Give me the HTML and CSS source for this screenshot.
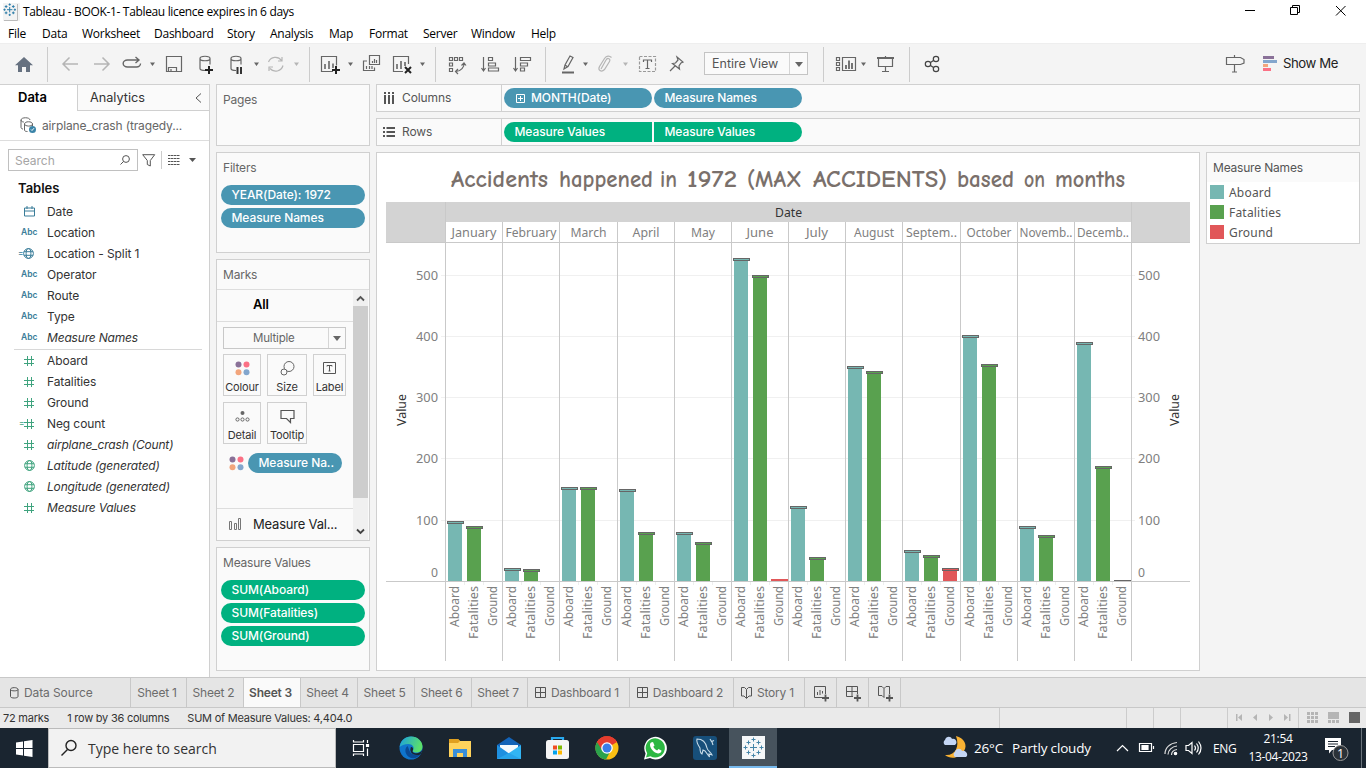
FILE: index.html
```html
<!DOCTYPE html>
<html lang="en">
<head>
<meta charset="utf-8">
<title>Tableau - BOOK-1</title>
<link rel="stylesheet" href="styles.css">
</head>
<body>
<svg width="0" height="0" class="defs" aria-hidden="true">
  <defs>
    <symbol id="hash" viewBox="0 0 10 10"><path d="M3.500 0v10M7.500 0v10M0 3.500h10M0 7.500h10" fill="none" stroke="#3fa37e" stroke-width="1"/></symbol>
    <symbol id="globe" viewBox="0 0 11 11"><g fill="none" stroke="currentColor" stroke-width="1"><circle cx="5.5" cy="5.5" r="4.9"/><ellipse cx="5.5" cy="5.5" rx="2.4" ry="4.9"/><path d="M1 3.7h9M1 7.3h9"/></g></symbol>
    <symbol id="dots" viewBox="0 0 15 15"><circle cx="3.5" cy="3.5" r="3" fill="#8a7198"/><circle cx="11.5" cy="3.5" r="3" fill="#fb7185"/><circle cx="3.5" cy="11.3" r="3" fill="#f2a57c"/><circle cx="11.5" cy="11.3" r="3" fill="#83a6cd"/></symbol>
    <symbol id="dash" viewBox="0 0 12 12"><path d="M.5 .5h10v10h-10zM5.500 .5v10M.5 5.5h10" fill="none" stroke="#555"/></symbol>
  </defs>
</svg>

<header class="titlebar">
  <svg class="app-icon" width="17" height="18" viewBox="0 0 17 18"><path d="M0 0h17v18H0z" fill="#f3f3f3"/><path d="M14.500 1v16.500H1" fill="none" stroke="#bbb"/><g stroke="#2b7ba8" stroke-width="1.1" transform="translate(-.5 -.5) scale(.9)"><path d="M8 5v6M5 8h6M8 1v2.5M6.8 2.3h2.4M8 12.500v2.500M6.800 13.700h2.400M2.300 6.800v2.400M1 8h2.500M13.700 6.800v2.400M12.500 8h2.500M4 3v3M2.500 4.500h3M12 3v3M10.500 4.500h3M4 10v3M2.500 11.500h3M12 10v3M10.500 11.500h3"/></g></svg>
  <span class="app-title">Tableau - BOOK-1- Tableau licence expires in 6 days</span>
  <svg class="win-ctl" width="126" height="23" viewBox="1236 0 126 23" fill="none" stroke="#000"><path d="M1245 10.500h10M1290.500 7.500h7v7h-7zM1292.500 7v-1.500h7v7h-1.500M1336 6l9.500 9.500M1345.500 6l-9.500 9.500"/></svg>
</header>
<nav class="menubar"><span>File</span><span>Data</span><span>Worksheet</span><span>Dashboard</span><span>Story</span><span>Analysis</span><span>Map</span><span>Format</span><span>Server</span><span>Window</span><span>Help</span></nav>

<div class="toolbar">
  <svg width="47" height="41" viewBox="0 43 47 41"><path d="M24 57l9 8.300h-3V72h-4v-5h-4v5h-4v-6.700h-3z" fill="#667180"/></svg>
  <i></i>
  <svg width="261" height="41" viewBox="48 43 261 41" fill="none" stroke="#666" stroke-width="1.200">
    <path d="M63 64h15M69.500 57.500L63 64l6.500 6.500M94 64h15M102.500 57.500L109 64l-6.500 6.500" stroke="#b5b5b5" stroke-width="1.500"/>
    <path d="M139 60h-11.500a4.200 3.400 0 0 0 0 7h9a4.200 3.400 0 0 0 4-3.500M135.500 57l3.500 3-3.500 3" stroke-width="1.400"/>
    <path d="M166.500 56.500h15v15h-15zM168.500 71v-3.500h8V71M171 71v-2"/>
    <path d="M209 70.500h-3.500c-3 0-5.500-.5-5.500-2v-10c0-3 10-3 10 0v6M200 58.500c0 3 10 3 10 0"/><path d="M205 70h8M209 66v8" stroke="#222" stroke-width="2"/>
    <path d="M236 70.500c-3 0-5-.5-5-2V58.500c0-3 10-3 10 0v6M231 58.500c0 3 10 3 10 0"/><path d="M237.500 67v7M241 67v7" stroke="#333" stroke-width="2"/>
    <path d="M268.500 62a7.500 7.500 0 0 1 13-1.500M283 65.500a7.500 7.500 0 0 1-13 3M282 57v4h-4M269 71v-4h4" stroke="#b5b5b5"/>
    <g stroke="none" fill="#666"><path d="M150 62.500h5l-2.500 3.500zM254 62.500h5l-2.500 3.500z"/><path d="M294 62.500h5l-2.500 3.500z" fill="#b5b5b5"/></g>
  </svg>
  <i></i>
  <svg width="125" height="41" viewBox="310 43 125 41" fill="none" stroke="#666" stroke-width="1.200">
    <path d="M333 71.500h-11.500v-15h15v9"/><path d="M325 69v-5M329 69v-8M333 68v-4.500" stroke-width="1.600"/><path d="M332 70h8M336 66v8" stroke="#222" stroke-width="2"/>
    <path d="M369.500 55.500h10v9h-10zM374.500 67.500v3h-11v-9.500h3.500M372.500 63v-2M374.500 63v-4M376.500 63v-3M366.500 69v-3M369.500 69v-3M372 69v-3"/>
    <path d="M403 71.500h-9.500v-15h15v7.500"/><path d="M397 69v-5M401 69v-8M405 66v-4" stroke-width="1.600"/><path d="M405 67l6 6M411 67l-6 6" stroke="#222" stroke-width="2"/>
    <g stroke="none" fill="#666"><path d="M348 62.500h5l-2.500 3.500zM420 62.500h5l-2.500 3.500z"/></g>
  </svg>
  <i></i>
  <svg width="109" height="41" viewBox="436 43 109 41" fill="none" stroke="#666" stroke-width="1.200">
    <path d="M449.500 57.500h3v3h-3zM454.500 57.500h3v3h-3zM459.500 57.500h3v3h-3zM449.500 63h3v3h-3zM449.500 68.500h3v3h-3zM464 63c.5 4-3 8-8 8.500M461.500 65.500l2.500-2.500 2 2.500M458 69l-2.500 2.500 2.500 2.500"/>
    <path d="M483.500 57v13M481.500 68l2 3 2-3M488.500 57.500h4v3h-4zM488.500 63h7v3h-7zM488.500 68h10v3h-10zM515.500 57v13M513.500 68l2 3 2-3M520.500 57.500h10v3h-10zM520.500 63h7v3h-7zM520.500 68h4v3h-4z"/>
  </svg>
  <i></i>
  <svg width="158" height="41" viewBox="546 43 158 41" fill="none" stroke="#666" stroke-width="1.200">
    <path d="M562 72.500h12" stroke-width="2"/><path d="M564 69l1-4 5-9 3 1.500-5 9zM565 65l3 2"/>
    <path d="M601 69l5-9c1.500-3 5-1 3.500 1.500l-5 8c-3 3-7 1-5-3l5-8c2-3 5-3 7-1" stroke="#b5b5b5"/>
    <path d="M639.500 56.500h16v15h-16z" stroke="#999" stroke-dasharray="3 1.500"/><path d="M643.500 62v-2h8v2M647.500 60v8.500M645.500 68.500h4"/>
    <path d="M677 57l6 5-2 1-2 3 .5 3-7-5.500 3-.5 2.500-3zM675 66l-5 5"/>
    <path d="M583 62.500h5l-2.500 3.500z" stroke="none" fill="#666"/><path d="M623 62.500h5l-2.500 3.500z" stroke="none" fill="#b5b5b5"/>
  </svg>
  <div class="view-select"><span>Entire View</span><b></b></div>
  <i class="after-select"></i>
  <svg width="85" height="41" viewBox="824 43 85 41" fill="none" stroke="#666" stroke-width="1.200"><path d="M836.500 57.500h3v3h-3zM836.500 62.500h3v3h-3zM836.500 67.500h3v3h-3zM842.500 57.500h13v13h-13z"/><path d="M846 69v-4M849 69v-8.500M852 69v-6" stroke-width="1.800"/><path d="M861 62.500h5l-2.500 3.500z" stroke="none" fill="#666"/><path d="M877 58h17" stroke-width="2"/><path d="M878.500 58v8.500h14V58M885.500 56v2M885.500 66.500v5M882 71.500h7"/></svg>
  <i></i>
  <svg width="60" height="41" viewBox="910 43 60 41" fill="none" stroke="#444" stroke-width="1.200"><circle cx="928" cy="64" r="2.700"/><circle cx="936" cy="59" r="2.700"/><circle cx="936" cy="69" r="2.700"/><path d="M930.500 62.500l3-2M930.500 65.500l3 2"/></svg>
  <div class="show-me"><svg width="60" height="41" viewBox="1223 43 60 41"><path d="M1234.500 55v3M1234.500 65v7M1232 72h5M1226.500 57.500h14l3.500 2v3.500l-3.500 1.500h-14z" fill="none" stroke="#666" stroke-width="1.200"/><path d="M1263 56h11v3h-11z" fill="#8a7198"/><path d="M1263 60h14v3h-14z" fill="#83a6cd"/><path d="M1263 64h5v3h-5z" fill="#f2a57c"/><path d="M1263 68h8v3h-8z" fill="#fb7185"/></svg><span>Show Me</span></div>
</div>

<main class="work">
  <aside class="data-pane">
    <div class="pane-tabs"><span class="on">Data</span><span class="off">Analytics<svg width="7" height="10" viewBox="0 0 7 10"><path d="M6 .5L1 5l5 4.500" fill="none" stroke="#555"/></svg></span></div>
    <div class="source"><svg width="17" height="17" viewBox="0 0 17 17" fill="none" stroke="#666"><path d="M3 12c-1.500 0-2-1-2-2V3c0-3 9-3 9 0M1 3c0 2 3 2 3 2M4.500 7c0-3 8-3 8 0s-8 2.500-8 0v6c0 1 1 1.500 3 1.500M12.500 7v2"/><circle cx="12.500" cy="12.500" r="3.500" fill="#3a84a8" stroke="none"/><path d="M11 12.500l1 1 2-2.300" stroke="#fff"/></svg><span>airplane_crash (tragedy...</span></div>
    <div class="find">
      <div class="search"><span>Search</span><svg width="10" height="10" viewBox="0 0 10 10" fill="none" stroke="#555"><circle cx="6" cy="4" r="3.400"/><path d="M3.500 6.500L.5 9.500"/></svg></div>
      <svg width="14" height="13" viewBox="0 0 14 13"><path d="M.7 .7h12L8.300 6.500V12l-3-1.500v-4z" fill="none" stroke="#555"/></svg>
      <i></i>
      <svg width="30" height="12" viewBox="0 0 30 12"><path d="M0 1.500h12M0 4.500h12M0 7.500h12M0 10.500h12" stroke="#555" stroke-dasharray="2.500 .5"/><path d="M21 4h7l-3.500 4z" fill="#555"/></svg>
    </div>
    <h3>Tables</h3>
    <ul class="fields">
      <li><em><svg width="11" height="11" viewBox="0 0 11 11"><path d="M.5 2h10v8h-10zM.5 5h10M3 0v3M8 0v3" fill="none" stroke="#3a7d99"/></svg></em>Date</li>
      <li><em>Abc</em>Location</li>
      <li><em class="calc">=<svg width="11" height="11"><use href="#globe"/></svg></em>Location - Split 1</li>
      <li><em>Abc</em>Operator</li>
      <li><em>Abc</em>Route</li>
      <li><em>Abc</em>Type</li>
      <li class="it"><em>Abc</em>Measure Names</li>
    </ul>
    <ul class="fields measures">
      <li><em><svg width="10" height="10"><use href="#hash"/></svg></em>Aboard</li>
      <li><em><svg width="10" height="10"><use href="#hash"/></svg></em>Fatalities</li>
      <li><em><svg width="10" height="10"><use href="#hash"/></svg></em>Ground</li>
      <li><em class="calc">=<svg width="10" height="10"><use href="#hash"/></svg></em>Neg count</li>
      <li class="it"><em><svg width="10" height="10"><use href="#hash"/></svg></em>airplane_crash (Count)</li>
      <li class="it"><em><svg width="11" height="11"><use href="#globe"/></svg></em>Latitude (generated)</li>
      <li class="it"><em><svg width="11" height="11"><use href="#globe"/></svg></em>Longitude (generated)</li>
      <li class="it"><em><svg width="10" height="10"><use href="#hash"/></svg></em>Measure Values</li>
    </ul>
  </aside>

  <div class="cards">
    <section class="card pages"><h4>Pages</h4></section>
    <section class="card filters"><h4>Filters</h4><div class="pill">YEAR(Date): 1972</div><div class="pill">Measure Names</div></section>
    <section class="card marks">
      <h4>Marks</h4>
      <div class="marks-body">
        <div class="marks-main">
          <div class="all">All</div>
          <div class="mark-type"><span>Multiple</span><b></b></div>
          <div class="mark-btns">
            <div><svg width="15" height="15"><use href="#dots"/></svg>Colour</div>
            <div><svg width="15" height="15" viewBox="0 0 15 15" fill="none" stroke="#666"><circle cx="9" cy="5.500" r="5"/><circle cx="4" cy="11" r="3" fill="#fafafa"/></svg>Size</div>
            <div><svg width="15" height="15" viewBox="0 0 15 15" fill="none" stroke="#555"><path d="M1.500 1.500h12v11h-12zM5 5.500v-1h5v1M7.500 4.500v5.500M6.500 10h2"/></svg>Label</div>
            <div><svg width="15" height="15" viewBox="0 0 15 15" fill="none" stroke="#666"><circle cx="7.500" cy="4" r="2" fill="#666" stroke="none"/><circle cx="2.500" cy="10.500" r="1.600"/><circle cx="7.500" cy="10.500" r="1.600"/><circle cx="12.500" cy="10.500" r="1.600"/></svg>Detail</div>
            <div><svg width="15" height="15" viewBox="0 0 15 15" fill="none" stroke="#555" stroke-width="1.200"><path d="M1 1.500h13v8h-3.500v4l-4-4H1z"/></svg>Tooltip</div>
          </div>
          <div class="mark-pill"><svg width="15" height="15"><use href="#dots"/></svg><div class="pill">Measure Na..</div></div>
          <div class="mark-more"><svg width="13" height="12" viewBox="0 0 13 12" fill="none" stroke="#777"><path d="M.5 3.500h2v8h-2zM5.500 5.500h2v6h-2zM9.500 .5h2v11h-2z"/></svg>Measure Val...</div>
        </div>
        <div class="scroll"><svg width="9" height="7" viewBox="0 0 9 7"><path d="M1 5.500L4.500 2 8 5.500" fill="none" stroke="#555" stroke-width="1.800"/></svg><b></b><svg width="9" height="7" viewBox="0 0 9 7"><path d="M1 1.500L4.500 5 8 1.500" fill="none" stroke="#444" stroke-width="1.800"/></svg></div>
      </div>
    </section>
    <section class="card values"><h4>Measure Values</h4><div class="pill g">SUM(Aboard)</div><div class="pill g">SUM(Fatalities)</div><div class="pill g">SUM(Ground)</div></section>
  </div>

  <div class="canvas">
    <div class="shelf"><div class="shelf-name"><svg width="12" height="12" viewBox="0 0 12 12"><path d="M2 0v2M2 3v9M6 0v2M6 3v9M10 0v2M10 3v9" stroke="#555" stroke-width="2"/></svg>Columns</div><div class="pill"><svg width="9" height="9" viewBox="0 0 9 9"><path d="M.5 .5h8v8h-8zM2 4.500h5M4.500 2v5" fill="none" stroke="#fff"/></svg>MONTH(Date)</div><div class="pill">Measure Names</div></div>
    <div class="shelf"><div class="shelf-name"><svg width="12" height="12" viewBox="0 0 12 12"><path d="M0 2h2M3.500 2H12M0 6h2M3.500 6H12M0 10h2M3.500 10H12" stroke="#555" stroke-width="1.800"/></svg>Rows</div><div class="pill g left">Measure Values</div><div class="pill g right">Measure Values</div></div>
    <div class="view-row">
      <div class="viz"><svg id="chart" width="822" height="517" viewBox="377 153 822 517"></svg></div>
      <section class="legend"><h4>Measure Names</h4><p><b class="c1"></b>Aboard</p><p><b class="c2"></b>Fatalities</p><p><b class="c3"></b>Ground</p></section>
    </div>
  </div>
</main>

<nav class="sheets">
  <span class="first"><svg width="9" height="12" viewBox="0 0 9 12" fill="none" stroke="#555"><path d="M.5 2.500c0-2.500 7.500-2.500 7.500 0v7c0 2-7.500 2-7.500 0zM.5 2.500c0 1.800 7.500 1.800 7.500 0"/></svg>Data Source</span>
  <span>Sheet 1</span><span>Sheet 2</span><span class="on">Sheet 3</span><span>Sheet 4</span><span>Sheet 5</span><span>Sheet 6</span><span>Sheet 7</span>
  <span class="ic"><svg width="12" height="12"><use href="#dash"/></svg>Dashboard 1</span>
  <span class="ic"><svg width="12" height="12"><use href="#dash"/></svg>Dashboard 2</span>
  <span class="ic"><svg width="12" height="12" viewBox="0 0 12 12" fill="none" stroke="#555"><path d="M5.500 2.500L3.500 .5H.5v8.500h2.500l2.500 2.500L8 9h2.500V.5h-3zV11"/></svg>Story 1</span>
  <span class="add"><svg width="17" height="17" viewBox="0 0 17 17" fill="none" stroke="#555"><path d="M9 12.500H1.500v-11h11V9M4.500 10V7M7 10V5M9.500 8.500V6"/><path d="M9 13h7M12.500 9.500v7" stroke-width="1.800"/></svg></span>
  <span class="add"><svg width="17" height="17" viewBox="0 0 17 17" fill="none" stroke="#555"><path d="M8 11.500H1.500v-10h11V9M7 1.500v10M1.500 6.500h11"/><path d="M9 13h7M12.500 9.500v7" stroke-width="1.800"/></svg></span>
  <span class="add"><svg width="17" height="17" viewBox="0 0 17 17" fill="none" stroke="#555"><path d="M7 3.500L5 1.500H1.500v9H5l2 2V3.500l2-2h3.500V9"/><path d="M9 13h7M12.500 9.500v7" stroke-width="1.800"/></svg></span>
</nav>
<div class="status"><span>72 marks</span><span>1 row by 36 columns</span><span>SUM of Measure Values: 4,404.0</span>
  <svg width="368" height="20" viewBox="998 708 368 20"><path d="M999.500 708v20M1126.500 708v20M1153.500 708v20M1180.500 708v20M1227.500 708v20M1298.500 708v20" stroke="#ccc"/><g fill="#b5b5b5"><path d="M1236 714h1.500v7h-1.500zM1242 714v7l-4-3.500zM1257 714v7l-4-3.500zM1269 714v7l4-3.500zM1284 714v7l4-3.500zM1289 714h1.500v7h-1.500z"/><path d="M1307 712h3v3h-3zM1311 712h3v3h-3zM1315 712h3v3h-3zM1307 716h3v3h-3zM1311 716h3v3h-3zM1315 716h3v3h-3zM1307 720h3v3h-3zM1311 720h3v3h-3zM1315 720h3v3h-3zM1328 712h11v7h-11zM1328 720h3v3h-3zM1332 720h3v3h-3zM1336 720h3v3h-3z"/></g><path d="M1349 712h11v11h-11z" fill="#666"/></svg>
</div>

<footer class="taskbar">
  <div class="start"><svg width="17" height="17" viewBox="0 0 17 17"><path d="M0 2.500l7-1V8H0zM8 1.300L16.500 0v8H8zM0 9h7v6.500l-7-1zM8 9h8.500v8L8 15.700z" fill="#fff"/></svg></div>
  <div class="tsearch"><svg width="18" height="18" viewBox="0 0 18 18" fill="none" stroke="#222" stroke-width="1.400"><circle cx="11" cy="6.500" r="5"/><path d="M7.500 10.500L1.500 16.500"/></svg><span>Type here to search</span></div>
  <div class="apps">
    <span class="tasks"><svg width="18" height="18" viewBox="0 0 18 18" fill="none" stroke="#fff" stroke-width="1.200"><path d="M1.500 5.500h10v7h-10zM1.500 1v2h10V1M1.500 17v-2h10v2M15.500 1v3M15.500 9.500V17"/><path d="M14.500 5.500h2v2h-2z" fill="#fff"/></svg></span>
    <span><svg width="24" height="24" viewBox="0 0 24 24"><defs><linearGradient id="eg" x1="0" y1="0" x2="1" y2=".3"><stop offset="0" stop-color="#1a9fe0"/><stop offset="1" stop-color="#5be06a"/></linearGradient></defs><circle cx="12" cy="12" r="11.500" fill="#0f75cc"/><path d="M.7 11C1.500 4.500 6.500 .5 12 .5c7 0 11.500 5 11.500 10 0 4-3 6-6 6-3.500 0-4.500-1.500-3.500-2.500 2-3-1-6-4.500-6C5.500 8 2 9.500 .7 11z" fill="url(#eg)"/><path d="M8.500 10c-3 2-3 8 1.500 11 4 2.500 9 1 11.500-3-3 1.500-8 1-10-1.500-1.500-2-1.500-4-3-6.500z" fill="#0a4a94"/><path d="M14 14c-1.500 2 1 3.500 4 3.200 2.500-.2 4.500-1.700 5.300-3.700-.3 2-.8 3.500-2 5-4 1.500-9 0-9.800-3.500-.4-2 .5-4 .5-4 2 0 2.500 2 2 3z" fill="#1a2530"/></svg></span>
    <span><svg width="22" height="20" viewBox="0 0 22 20"><path d="M0 1h9l2 2h11v16H0z" fill="#ffd35c"/><path d="M0 1h9l2 2-2 2H0z" fill="#e0a020"/><path d="M4 11h14v8h-4v-4H8v4H4z" fill="#3a8fd8"/></svg></span>
    <span><svg width="24" height="23" viewBox="0 0 24 23"><path d="M0 8L12 0l12 8v14H0z" fill="#1263b8"/><path d="M3 8h18v3l-9 7-9-7z" fill="#f4f9fd"/><path d="M0 8l12 8.500V22H0z" fill="#1e90e0"/><path d="M24 8l-12 8L3 22h21z" fill="#32b5f3"/><path d="M0 22l12-6 12 6z" fill="#28a4ea"/></svg></span>
    <span><svg width="23" height="24" viewBox="0 0 23 24"><path d="M6 6V2h11v4" fill="none" stroke="#29a9ee" stroke-width="2.200"/><rect x="0" y="4" width="23" height="19" rx="2.500" fill="#f5f5f5"/><path d="M7 9.500h4v4H7z" fill="#f04e23"/><path d="M12 9.500h4v4h-4z" fill="#7eb901"/><path d="M7 14.500h4v4H7z" fill="#02a3ee"/><path d="M12 14.500h4v4h-4z" fill="#feb800"/></svg></span>
    <span><svg width="24" height="24" viewBox="0 0 24 24"><circle cx="12" cy="12" r="11.500" fill="#fbbf12"/><path d="M12 12L2 6A11.500 11.500 0 0 1 22 6z" fill="#e53c2e"/><path d="M12 12L2 6a11.500 11.500 0 0 0 9 17.500L16 14z" fill="#2ba24c"/><path d="M12 6h10a11.500 11.500 0 0 0-20 0l5 8z" fill="#e53c2e"/><circle cx="12" cy="12" r="5.800" fill="#fff"/><circle cx="12" cy="12" r="4.500" fill="#3a7de8"/></svg></span>
    <span><svg width="23" height="24" viewBox="0 0 23 24"><path d="M0 23.500l1.600-6A11.300 11.300 0 1 1 6 22z" fill="#fff"/><path d="M2 21.500l1.200-4.300A9.600 9.600 0 1 1 6.500 20.300z" fill="#2cb742"/><path d="M7 6.500l2-.5 1.500 3.500-1.200 1.300c1 2 2 2.800 3.800 3.700l1.400-1.500 3 1.500c.2 2-2 3-3.500 3C10 17 6 12 6 9c0-1 .4-2 1-2.500z" fill="#fff"/></svg></span>
    <span><svg width="24" height="24" viewBox="0 0 24 24"><rect width="24" height="24" rx="3" fill="#174f7a"/><path d="M4 3c6 0 9 4 10 9 .5 3 4 4 5 7l-3-1 .5 3-4.500-6-2-1-1 4c-2-1-2-4-2-6-2-3-4-6-3-9zM17 3l1.500 2.500L21 4.500M19 6l1 3" fill="none" stroke="#c9dce8" stroke-width="1.100"/></svg></span>
    <span class="active"><svg width="23" height="23" viewBox="0 0 23 23"><path d="M0 0h23v23H0z" fill="#f5f7f8"/><path d="M11.500 8v7M8 11.500h7M11.500 1.500v4M9.500 3.500h4M11.500 17.500v4M9.500 19.500h4M3.500 9.500v4M1.500 11.500h4M19.500 9.500v4M17.500 11.500h4M6.500 4.500v4M4.500 6.500h4M16.500 4.500v4M14.500 6.500h4M6.500 14.500v4M4.500 16.500h4M16.500 14.500v4M14.500 16.500h4" stroke="#4585a8" stroke-width="1"/></svg></span>
  </div>
  <div class="weather"><svg width="26" height="24" viewBox="0 0 26 24"><path d="M14 0c8 2 12 9 8 15-4 7-13 9-19 4 10 1 15-8 11-19z" fill="#f9b233"/><path d="M3 9a3 3 0 0 1 0-5c1-4 6-4 7-1 4-1 6 4 3 6zM13 21a3 3 0 0 1 0-5c1-4 6-4 7-1 4-1 7 4 4 6z" fill="#c4d6f4"/></svg><span>26°C</span><span>Partly cloudy</span></div>
  <svg class="tray" width="92" height="24" viewBox="1115 736 92 24" fill="none" stroke="#fff" stroke-width="1.200"><path d="M1118 751l5.500-5.500 5.500 5.500"/><path d="M1140.500 743.500h12v8h-12zM1154.500 746v3"/><path d="M1143 745.500h6v4h-6z" fill="#fff"/><path d="M1166 754c0-6 5-11 12-11.500M1169 754.500c0-4 4-8 9-8.500M1172.500 755c0-3 2.500-5 5.500-5.500" stroke="#ddd"/><circle cx="1176.500" cy="753.500" r="1.200" fill="#fff"/><path d="M1187 745.500h2.500l3.500-3v11l-3.500-3h-2.500zM1195.500 745.500q2 2.500 0 5M1197.500 743.500q3.500 4.500 0 9M1199.500 741.500q5 6.500 0 13"/></svg>
  <span class="lang">ENG</span>
  <div class="clock"><span>21:54</span><span class="date">13-04-2023</span></div>
  <svg class="notify" width="26" height="26" viewBox="0 0 26 26"><path d="M1 3h16v12H8l-3 3.500V15H1z" fill="#fff"/><path d="M4 6.500h10M4 9h10M4 11.500h7" stroke="#1a2530"/><circle cx="16.500" cy="18" r="7.500" fill="#2b3238" stroke="#999"/><text x="13" y="22.500">1</text></svg>
  <b class="peek"></b>
</footer>
<script src="chart.js"></script>
</body>
</html>
```
FILE: chart.js
```js
const months = [
  ["January", 445, 521, 526], ["February", 502, 568, 569], ["March", 559, 487, 487],
  ["April", 617, 489, 532], ["May", 674, 532, 542], ["June", 731, 258, 275, 579],
  ["July", 788, 506, 557], ["August", 845, 366, 371], ["Septem..", 902, 550, 555, 568],
  ["October", 960, 335, 364], ["Novemb..", 1017, 526, 535], ["Decemb..", 1074, 342, 466, 580]
];
const monthW = [45, 51, 36, 27, 24, 27, 22, 40, 51, 45, 53, 52];
const titleWords = [
  ["Accidents", 451, 97], ["happened", 559, 94], ["in", 660, 17], ["1972", 687, 50],
  ["(MAX", 747, 55], ["ACCIDENTS)", 813, 134], ["based", 957, 57], ["on", 1024, 21], ["months", 1055, 70]
];
const colors = ["#76b7b2", "#59a14f", "#e15759"];
const names = [["Aboard", 41], ["Fatalities", 53], ["Ground", 40]];
const base = 581;
let s = "";
const rect = (x, y, w, h, f, extra = "") => { s += `<rect x="${x}" y="${y}" width="${w}" height="${h}" fill="${f}" ${extra}/>`; };
const text = (x, y, t, w, cls, extra = "") => { s += `<text x="${x}" y="${y}" textLength="${w}" lengthAdjust="spacingAndGlyphs" class="${cls}" ${extra}>${t}</text>`; };

titleWords.forEach(([t, x, w]) => text(x, 187, t, w, "ttl"));
rect(386, 202, 804, 40, "#d3d3d3");
rect(446, 222, 685, 20, "#fff");
text(775, 217, "Date", 27, "dt");
[[500, 275], [400, 336], [300, 397], [200, 458], [100, 520]].forEach(([v, y]) => {
  rect(441, y, 694, 1, "#f0f0f0");
  text(416, y + 5, v, 22, "ax");
  text(1138, y + 5, v, 22, "ax");
});
text(431, 577, "0", 7, "ax");
text(1138, 577, "0", 7, "ax");
rect(386, 242, 804, 1, "#c9c9c9");
months.forEach(([m, x, ...tops], i) => {
  const next = i < 11 ? months[i + 1][1] : 1131;
  text((x + next - monthW[i]) / 2 + 0.5, 237, m, monthW[i], "mo");
  tops.forEach((t, k) => {
    const bx = x + 3 + k * 19;
    if (base - t > 3) {
      rect(bx, t + 1, 14, base - t - 1, colors[k]);
      rect(bx - 0.5, t + 0.5, 16, 2, colors[k], 'stroke="#666"');
    } else {
      rect(bx - 1, t, 17, 1, "#666");
      if (base - t > 1) rect(bx - 1, t, 17, base - t, colors[k]);
    }
  });
  names.forEach(([n, w], k) => {
    const tx = x + 14 + k * 19;
    text(0, 0, n, w, "ax", `transform="translate(${tx} ${586 + w}) rotate(-90)"`);
    if (k) rect(x + k * 19, 582, 1, 3, "#eee");
  });
});
rect(386, 581, 804, 1, "#c9c9c9");
const edges = [...months.map(m => m[1]), 1131];
edges.forEach((x, i) => {
  const top = i === 0 || i === edges.length - 1 ? 202 : 222;
  rect(x, top, 1, 661 - top, "#c9c9c9");
});
text(0, 0, "Value", 32, "val", 'transform="translate(406 426) rotate(-90)"');
text(0, 0, "Value", 32, "val", 'transform="translate(1179 426) rotate(-90)"');
document.getElementById("chart").innerHTML = s;
```
FILE: styles.css
```css
* { box-sizing: border-box; margin: 0; padding: 0; }
body { width: 1366px; height: 768px; overflow: hidden; background: #f4f4f4; font: 12px Inter, sans-serif; color: #333; display: flex; flex-direction: column; white-space: nowrap; }
svg { display: block; flex: none; }
.defs { position: absolute; }
.titlebar { height: 23px; background: #fff; display: flex; align-items: center; flex: none; padding-left: 3px; }
.app-title { margin-left: 3px; font: 12px "Open Sans", sans-serif; letter-spacing: -.34px; color: #000; }
.win-ctl { margin-left: auto; margin-right: 4px; }
.menubar { height: 20px; background: #fff; flex: none; display: grid; grid-template-columns: 34px 40px 72px 73px 43px 59px 40px 54px 48px 60px auto; padding-left: 8px; font: 12px/22px "Open Sans", sans-serif; letter-spacing: -.25px; color: #000; }
.toolbar { height: 41px; flex: none; display: flex; border-top: 1px solid #eee; }
.toolbar > svg { margin-top: -1px; }
.toolbar > i { width: 1px; height: 35px; margin-top: 3px; background: #ccc; }
.view-select { width: 104px; height: 23px; margin-top: 8px; border: 1px solid #c4c4c4; background: #fafafa; display: flex; font-size: 12.5px; line-height: 21px; color: #555; }
.view-select span { width: 85px; padding-left: 7px; border-right: 1px solid #d5d5d5; }
.view-select b { margin: 9px 0 0 5px; }
.view-select b, .mark-type b { border: 4px solid transparent; border-top: 5px solid #666; border-bottom: 0; height: 0; }
.toolbar .after-select { margin-left: 15px; }
.show-me { margin-left: auto; width: 143px; display: flex; font-size: 13.2px; line-height: 39px; color: #222; letter-spacing: -.45px; }
.show-me svg { margin-top: -1px; }
.work { height: 593px; flex: none; display: flex; }
.data-pane { width: 210px; background: #fff; border-right: 1px solid #d0d0d0; border-top: 1px solid #d0d0d0; flex: none; }
.pane-tabs { display: flex; height: 26px; font-size: 12.7px; line-height: 25px; }
.pane-tabs .on { width: 77px; padding-left: 18px; font-weight: 600; font-size: 13px; color: #000; }
.pane-tabs .off { flex: 1; border-left: 1px solid #d0d0d0; border-bottom: 1px solid #d0d0d0; padding: 0 7px 0 12px; background: #fafafa; display: flex; justify-content: space-between; align-items: center; }
.source { height: 30px; border-bottom: 1px solid #ddd; padding-left: 20px; display: flex; align-items: center; gap: 5px; color: #666; letter-spacing: -.14px; }
.find { display: flex; align-items: center; height: 22px; margin: 8px 0 0 8px; }
.search { width: 130px; height: 22px; border: 1px solid #c0c0c0; padding: 0 7px 0 6px; display: flex; align-items: center; justify-content: space-between; color: #a5a5a5; }
.find > svg { margin-left: 4px; }
.find > i { width: 1px; height: 18px; background: #ccc; margin: 0 2px 0 5px; }
h3 { font-size: 13px; line-height: 18px; font-weight: 600; color: #111; margin: 8px 0 4px 18px; }
.fields { list-style: none; }
.fields li { height: 21px; line-height: 21px; display: flex; align-items: center; color: #333; letter-spacing: -.1px; }
.fields .it { font-style: italic; letter-spacing: -.18px; }
.fields em { flex: none; width: 36px; margin-right: 11px; padding-left: 21px; display: flex; align-items: center; color: #3a7d99; font: 600 8.5px/21px Inter, sans-serif; letter-spacing: 0; }
.fields em > svg { margin-left: 3px; }
.fields .calc { padding-left: 18px; font-size: 8px; }
.fields .calc > svg { margin-left: 0; }
.measures { border-top: 1px solid #d8d8d8; margin: 1px 7px 0 14px; }
.measures li em { width: 22px; padding-left: 7px; color: #3fa37e; }
.measures .calc { padding-left: 5px; }
.cards { width: 154px; margin-left: 6px; display: flex; flex-direction: column; gap: 6px; flex: none; }
.card, .shelf, .legend { border: 1px solid #d0d0d0; background: #fafafa; }
h4 { font-weight: 400; font-size: 12px; line-height: 30px; padding-left: 6px; color: #666; letter-spacing: -.2px; }
.pages { height: 62px; }
.filters { height: 101px; }
.marks { height: 282px; }
.values { height: 124px; }
.pill { height: 20px; border-radius: 10px; background: #4996b2; color: #fff; font-weight: 500; line-height: 20px; padding-left: 10.500px; letter-spacing: -.08px; }
.g { background: #00b180; }
.card > .pill { width: 144px; margin: 0 0 3px 4px; }
.filters > h4 { line-height: 30px; height: 32px; }
.values > h4 { line-height: 30px; height: 32px; }
.marks h4 { border-bottom: 1px solid #ddd; height: 30px; }
.marks-body { display: flex; }
.marks-main { width: 136px; height: 250px; }
.all { height: 32px; line-height: 29px; padding-left: 36px; font-weight: 600; font-size: 13px; color: #000; border-bottom: 1px solid #ddd; letter-spacing: -.2px; }
.mark-type { width: 123px; height: 22px; margin: 5px 0 0 6px; border: 1px solid #c8c8c8; display: flex; font-size: 11.5px; line-height: 20px; color: #666; letter-spacing: -.2px; }
.mark-type span { width: 105px; padding-left: 29px; border-right: 1px solid #d5d5d5; }
.mark-type b { margin: 8px 0 0 4px; }
.mark-btns { display: grid; grid-template-columns: 38px 40px 33px; gap: 6px; margin: 5px 0 0 6px; }
.mark-btns div { height: 42px; border: 1px solid #d0d0d0; display: flex; flex-direction: column; align-items: center; font-size: 11px; line-height: 18px; padding-top: 6px; gap: 2px; letter-spacing: -.15px; }
.mark-pill { display: flex; align-items: center; gap: 4px; margin: 9px 0 0 12px; }
.mark-pill .pill { width: 94px; }
.mark-more { margin-top: 35px; border-top: 1px solid #ddd; height: 32px; display: flex; align-items: center; gap: 11px; padding-left: 12px; padding-bottom: 2px; font-size: 13px; color: #222; letter-spacing: -.2px; }
.scroll { width: 15px; height: 250px; background: #f0f0f0; display: flex; flex-direction: column; align-items: center; justify-content: space-between; padding: 5px 0; }
.scroll b { width: 15px; height: 192px; background: #cdcdcd; margin-bottom: 27px; }
.canvas { width: 984px; margin-left: 6px; display: flex; flex-direction: column; gap: 6px; flex: none; }
.shelf { height: 28px; display: flex; align-items: center; gap: 2px; color: #555; }
.shelf-name { width: 125px; height: 26px; border-right: 1px solid #d0d0d0; display: flex; align-items: center; gap: 7px; padding-left: 6px; padding-bottom: 1px; letter-spacing: -.1px; }
.shelf .pill { width: 148px; display: flex; align-items: center; gap: 6px; }
.shelf .pill:has(svg) { padding-left: 12px; }
.left { border-radius: 10px 0 0 10px; }
.right { border-radius: 0 10px 10px 0; }
.view-row { display: flex; gap: 6px; align-items: flex-start; }
.viz { width: 824px; height: 519px; border: 1px solid #d0d0d0; background: #fff; }
.legend { width: 154px; height: 92px; background: #fff; }
.legend h4 { background: #fafafa; height: 29px; color: #555; }
.legend p { display: flex; align-items: center; height: 20px; gap: 5px; padding-left: 3px; color: #555; font: 12px "Noto Sans", sans-serif; letter-spacing: .2px; }
.legend b { width: 14px; height: 14px; }
.c1 { background: #76b7b2; }
.c2 { background: #59a14f; }
.c3 { background: #e15759; }
.ttl { font: 700 25px "Comic Sans MS", "Comic Neue", "Open Sans", sans-serif; fill: #7a706b; }
.ax, .mo { font: 12px "Noto Sans", sans-serif; fill: #808080; }
.dt, .val { font: 12px "Noto Sans", sans-serif; fill: #333; }
.sheets { height: 31px; flex: none; background: #e5e5e5; border-top: 1px solid #c8c8c8; border-bottom: 1px solid #c8c8c8; display: grid; grid-template-columns: 131px 56px 57px 57px 57px 57px 57px 56px 102px 104px 71px 32px 32px 32px; color: #6c6c6c; }
.sheets span { border-right: 1px solid #c8c8c8; display: flex; align-items: center; justify-content: center; gap: 4px; letter-spacing: -.2px; padding-right: 3px; }
.sheets .first { justify-content: flex-start; padding-left: 10px; gap: 5px; letter-spacing: -.1px; }
.sheets .add { padding: 1px 0 0 2px; }
.sheets .on { background: #fafafa; font-weight: 600; color: #555; }
.status { height: 20px; flex: none; background: #eaeaea; display: flex; font-size: 11px; line-height: 20px; color: #333; gap: 18px; padding-left: 3px; letter-spacing: -.23px; }
.status svg { margin-left: auto; }
.taskbar { height: 40px; flex: none; background: #1a2530; display: flex; align-items: center; color: #fff; font-family: "Open Sans", sans-serif; }
.start { width: 48px; display: flex; justify-content: center; }
.tsearch { width: 288px; height: 40px; background: #f2f2f2; border: 1px solid #bbb; display: flex; align-items: center; gap: 10px; padding-left: 11px; color: #333; font-size: 14px; }
.apps { display: grid; grid-template-columns: 50px repeat(8, 49px); }
.apps span { display: flex; height: 40px; align-items: center; justify-content: center; }
.apps .tasks { padding-right: 1px; }
.apps .active { background: #47535d; border-bottom: 2px solid #76b9ed; width: 48px; }
.weather { display: flex; align-items: center; margin-left: 164px; font-size: 13.5px; letter-spacing: -.16px; width: 172px; }
.weather span { margin-left: 6px; }
.weather span + span { margin-left: 9px; }
.lang { margin-left: 7px; width: 28px; letter-spacing: -.3px; }
.clock { width: 73px; padding-left: 1px; display: flex; flex-direction: column; align-items: center; line-height: 18px; letter-spacing: -.35px; }
.notify { margin-left: 10px; }
.notify text { font: 12.5px "Open Sans", sans-serif; fill: #fff; }
.peek { width: 1px; height: 40px; background: #6a737b; margin-left: auto; margin-right: 4px; }
```
